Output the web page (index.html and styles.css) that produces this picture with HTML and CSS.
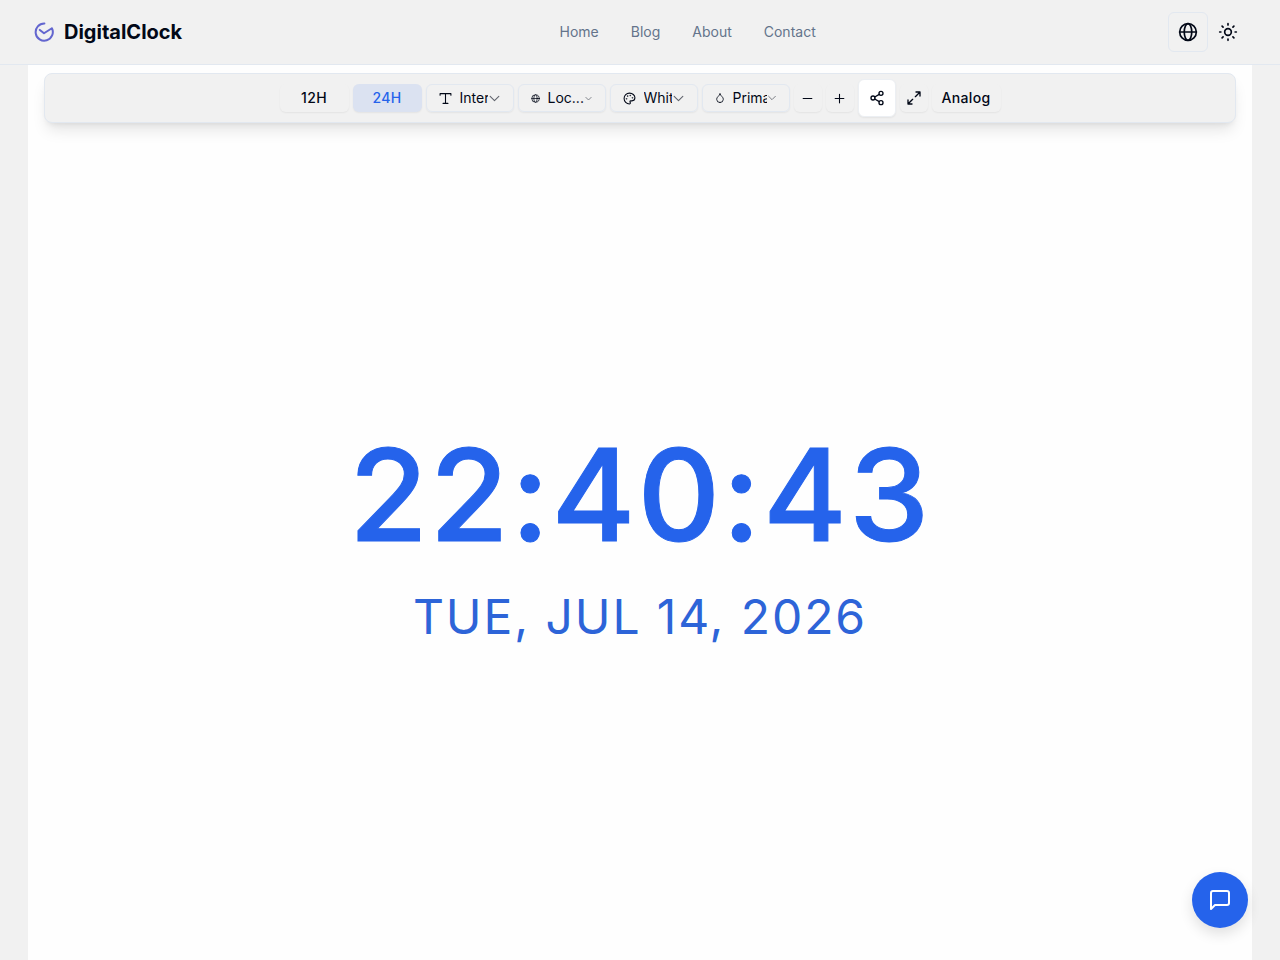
FILE: index.html
```html
<!doctype html>
<html lang="en">
  <head>
    <meta charset="utf-8" />
    <meta name="viewport" content="width=device-width, initial-scale=1" />
    <title>DigitalClock</title>
    <link rel="stylesheet" href="styles.css">
  </head>
  <body>
    <header class="header">
      <a class="logo" href="#">
        <svg class="icon logo-icon" viewBox="0 0 24 24">
          <path d="M12.500 1.800A10.300 10.300 0 1 0 21.500 7.500L12 13.500 7 9.500" />
        </svg>
        DigitalClock
      </a>
      <nav class="nav">
        <a href="#">Home</a>
        <a href="#">Blog</a>
        <a href="#">About</a>
        <a href="#">Contact</a>
      </nav>
      <div class="header-actions">
        <button class="icon-button outlined" aria-label="Language">
          <svg class="icon" viewBox="0 0 24 24">
            <circle cx="12" cy="12" r="10" />
            <ellipse cx="12" cy="12" rx="4.5" ry="10" />
            <path d="M2 12h20" />
          </svg>
        </button>
        <button class="icon-button" aria-label="Theme">
          <svg class="icon" viewBox="0 0 24 24">
            <circle cx="12" cy="12" r="4" />
            <path d="M12 2v1.500M12 20.500V22M4.900 4.900l1.200 1.200M17.900 17.900l1.200 1.200M2 12h1.500M20.500 12H22M6.100 17.900l-1.200 1.200M19.100 4.900l-1.200 1.200" />
          </svg>
        </button>
      </div>
    </header>

    <main class="stage">
      <div class="toolbar">
        <button class="tool format">12H</button>
        <button class="tool format active">24H</button>

        <label class="tool picker">
          <svg class="icon" viewBox="0 0 24 24">
            <path d="M2 6V3h20v3M12 3v18M7.5 21h9" />
          </svg>
          <select aria-label="Font">
            <option>Inter</option>
          </select>
          <svg class="icon chevron" viewBox="0 0 24 24"><path d="M4 8l8 8 8-8" /></svg>
        </label>

        <label class="tool picker small">
          <svg class="icon" viewBox="0 0 24 24">
            <circle cx="12" cy="12" r="10" />
            <ellipse cx="12" cy="12" rx="4.5" ry="10" />
            <path d="M2 12h20" />
          </svg>
          <select aria-label="Time zone">
            <option>Loc...</option>
          </select>
          <svg class="icon chevron" viewBox="0 0 24 24"><path d="M5 9l7 7 7-7" /></svg>
        </label>

        <label class="tool picker">
          <svg class="icon" viewBox="0 0 24 24">
            <circle cx="13.5" cy="6.5" r=".5" />
            <circle cx="17.5" cy="10.5" r=".5" />
            <circle cx="8.5" cy="7.5" r=".5" />
            <circle cx="6.5" cy="12.5" r=".5" />
            <path d="M12 2C6.500 2 2 6.500 2 12s4.500 10 10 10c.9 0 1.600-.7 1.600-1.700 0-.4-.2-.8-.4-1.100-.3-.3-.4-.7-.4-1.100 0-.9.7-1.700 1.700-1.700h2c3 0 5.500-2.500 5.500-5.600C22 6 17.500 2 12 2z" />
          </svg>
          <select aria-label="Background">
            <option>White</option>
          </select>
          <svg class="icon chevron" viewBox="0 0 24 24"><path d="M4 8l8 8 8-8" /></svg>
        </label>

        <label class="tool picker medium">
          <svg class="icon" viewBox="0 0 24 24">
            <path d="M12 23a8 8 0 0 0 8-8c0-2.500-1.200-4.500-3.200-6.300C14.500 6.700 12.700 4 12 1c-.7 3-2.500 5.700-4.800 7.700C5.200 10.500 4 12.500 4 15a8 8 0 0 0 8 8z" />
          </svg>
          <select aria-label="Color">
            <option>Primary</option>
          </select>
          <svg class="icon chevron" viewBox="0 0 24 24"><path d="M4 8l8 8 8-8" /></svg>
        </label>

        <button class="tool square" aria-label="Smaller">
          <svg class="icon" viewBox="0 0 24 24"><path d="M4 12h16" /></svg>
        </button>
        <button class="tool square" aria-label="Larger">
          <svg class="icon" viewBox="0 0 24 24"><path d="M4 12h16M12 4v16" /></svg>
        </button>
        <button class="tool share" aria-label="Share">
          <svg class="icon" viewBox="0 0 24 24">
            <circle cx="18" cy="5" r="3" />
            <circle cx="6" cy="12" r="3" />
            <circle cx="18" cy="19" r="3" />
            <path d="M8.600 13.500l6.800 4M15.400 6.500l-6.800 4" />
          </svg>
        </button>
        <button class="tool square expand" aria-label="Fullscreen">
          <svg class="icon" viewBox="0 0 24 24">
            <path d="M15 3h6v6M9 21H3v-6M21 3l-7 7M3 21l7-7" />
          </svg>
        </button>
        <button class="tool format">Analog</button>
      </div>

      <div class="clock">
        <div class="time">22:40:43</div>
        <div class="date">TUE, JUL 14, 2026</div>
      </div>
    </main>

    <button class="chat" aria-label="Chat">
      <svg class="icon" viewBox="0 0 24 24">
        <path d="M21 15a2 2 0 0 1-2 2H7l-4 4V5a2 2 0 0 1 2-2h14a2 2 0 0 1 2 2z" />
      </svg>
    </button>
  </body>
</html>
```

FILE: styles.css
```css
:root {
  --background: #f1f1f1;
  --surface: #fefefe;
  --text-color: #020817;
  --muted: #64748b;
  --border-color: #e2e8f0;
  --primary-color: #2563eb;
}

* {
  box-sizing: border-box;
}

body {
  margin: 0;
  background-color: var(--background);
  color: var(--text-color);
  font-family: Inter, "Liberation Sans", sans-serif;
  font-size: 14px;
  line-height: 20px;
}

a {
  color: inherit;
  text-decoration: none;
}

button,
select {
  font: inherit;
  color: inherit;
  cursor: pointer;
}

.icon {
  flex: none;
  width: 20px;
  height: 20px;
  fill: none;
  stroke: currentColor;
  stroke-width: 2;
  stroke-linecap: round;
  stroke-linejoin: round;
}

.header {
  display: flex;
  align-items: center;
  justify-content: space-between;
  height: 65px;
  padding: 0 32px;
  border-bottom: 1px solid var(--border-color);
}

.logo {
  display: flex;
  align-items: center;
  gap: 8px;
  padding-right: 25px;
  font-size: 20px;
  font-weight: 700;
}

.logo-icon {
  width: 24px;
  height: 20px;
  color: #6366cf;
  stroke-width: 2.4;
}

.nav {
  display: flex;
  gap: 32px;
  color: var(--muted);
}

.header-actions {
  display: flex;
}

.icon-button {
  display: flex;
  align-items: center;
  justify-content: center;
  width: 40px;
  height: 40px;
  padding: 0;
  background: none;
  border: 1px solid transparent;
  border-radius: 6px;
}

.outlined {
  border-color: var(--border-color);
}

.stage {
  display: flex;
  flex-direction: column;
  min-height: calc(100vh - 65px);
  margin: 0 28px;
  padding: 8px 16px 0;
  background-color: var(--surface);
}

.toolbar {
  display: flex;
  align-items: center;
  justify-content: center;
  gap: 4px;
  height: 50px;
  background-color: var(--background);
  border: 1px solid var(--border-color);
  border-radius: 8px;
  box-shadow:
    0 10px 15px -3px rgba(0, 0, 0, 0.1),
    0 4px 6px -4px rgba(0, 0, 0, 0.1);
}

.tool {
  display: flex;
  align-items: center;
  justify-content: center;
  height: 28px;
  padding: 0;
  background-color: transparent;
  border: 0;
  border-radius: 6px;
  box-shadow: 0 1px 2px rgba(0, 0, 0, 0.06);
}

.format {
  width: 69px;
  font-weight: 500;
  letter-spacing: 0.025em;
}

.active {
  background-color: #dbe2f1;
  color: var(--primary-color);
}

.picker {
  justify-content: flex-start;
  width: 88px;
  padding: 0 12px;
  border: 1px solid var(--border-color);
}

.picker .icon {
  width: 13px;
  height: 13px;
}

.picker.medium .icon {
  width: 10px;
  height: 10px;
}

.picker.small .icon {
  width: 9px;
  height: 9px;
}

.picker .chevron {
  opacity: 0.6;
}

.picker select {
  flex: 1;
  min-width: 0;
  height: 20px;
  margin-left: 8px;
  padding: 0;
  appearance: none;
  background: none;
  border: 0;
  outline: none;
  text-overflow: clip;
}

.square {
  width: 28px;
}

.square .icon {
  width: 13px;
  height: 13px;
}

.share {
  width: 38px;
  height: 38px;
  background-color: #fff;
  border: 1px solid #eceff3;
}

.share .icon,
.expand .icon {
  width: 16px;
  height: 16px;
}

.clock {
  flex: 1;
  display: flex;
  flex-direction: column;
  align-items: center;
  justify-content: center;
  gap: 22px;
  color: var(--primary-color);
  text-align: center;
}

.time {
  font-size: 128px;
  font-weight: 500;
  line-height: 128px;
  letter-spacing: 2px;
  -webkit-text-stroke: 1px var(--primary-color);
}

.date {
  color: #2d64d8;
  font-size: 48px;
  line-height: 72px;
  letter-spacing: 0.04em;
}

.chat {
  position: fixed;
  right: 32px;
  bottom: 32px;
  display: flex;
  align-items: center;
  justify-content: center;
  width: 56px;
  height: 56px;
  padding: 0;
  background-color: var(--primary-color);
  color: #fff;
  border: 0;
  border-radius: 50%;
  box-shadow: 0 6px 14px rgba(0, 0, 0, 0.12);
}

.chat .icon {
  width: 24px;
  height: 24px;
}
```
